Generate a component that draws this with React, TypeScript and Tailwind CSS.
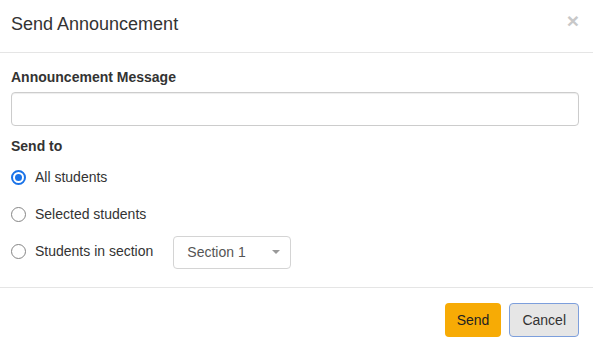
const Radio = ({ checked }: { checked?: boolean }) =>
  checked ? (
    <span className="flex h-[15px] w-[15px] items-center justify-center rounded-full border-2 border-[#1a73e8] bg-white">
      <span className="h-[7px] w-[7px] rounded-full bg-[#1a73e8]" />
    </span>
  ) : (
    <span className="h-[15px] w-[15px] rounded-full border border-[#858585] bg-white" />
  );

const App = () => {
  return (
    <div
      className="h-[346px] w-[593px] bg-white text-[14px] text-[#333]"
      style={{ fontFamily: '"Liberation Sans", Arial, sans-serif' }}
    >
      <div className="flex h-[53px] items-start justify-between border-b border-[#e5e5e5] pl-[11px] pr-[14px] pt-[11px]">
        <h4 className="text-[18px] leading-[26px]">Send Announcement</h4>
        <button className="mt-[-2px] text-[21px] font-bold leading-[24px] text-[#c8c8c8]">×</button>
      </div>

      <div className="pl-[11px] pr-[14px] pt-[14px] pb-[20px]">
        <label className="mb-[5px] block font-bold leading-[20px]">Announcement Message</label>
        <input
          type="text"
          className="block h-[34px] w-full rounded-[4px] border border-[#ccc] px-3 shadow-[inset_0_1px_1px_rgba(0,0,0,0.075)] outline-none"
        />
        <div className="mt-[10px] font-bold leading-[20px]">Send to</div>
        <div className="mt-[5px] flex flex-col gap-[5px]">
          <div className="flex h-[32px] items-center">
            <Radio checked />
            <span className="ml-[9px]">All students</span>
          </div>
          <div className="flex h-[32px] items-center">
            <Radio />
            <span className="ml-[9px]">Selected students</span>
          </div>
          <div className="flex h-[32px] items-center">
            <Radio />
            <span className="ml-[9px]">Students in section</span>
            <div className="ml-[20px] mt-[2px] flex h-[33px] w-[118px] items-center justify-between rounded-[4px] border border-[#d4d4d4] pl-[13px] pr-[10px] text-[#555]">
              <span>Section 1</span>
              <span className="h-0 w-0 border-x-[4px] border-t-[4px] border-x-transparent border-t-[#999]" />
            </div>
          </div>
        </div>
      </div>

      <div className="flex justify-end gap-2 border-t border-[#e5e5e5] pr-[14px] pt-[15px]">
        <button className="h-[34px] rounded-[4px] bg-[#f7ab05] px-[12px] text-[#222]">Send</button>
        <button className="h-[34px] rounded-[4px] border border-[#7d9fdc] bg-[#e6e6e6] px-[12px] text-[#333]">
          Cancel
        </button>
      </div>
    </div>
  );
};

export default App;
